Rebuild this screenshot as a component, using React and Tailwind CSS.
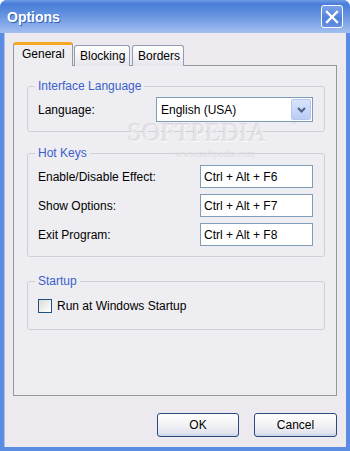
import React from "react";

function Group({ title, className = "", children }) {
  return (
    <fieldset
      className={`border border-[#D0CFD6] rounded-[3px] pl-[7px] pr-[11px] ${className}`}
    >
      <legend className="px-[3px] text-[12px] leading-[14px] text-[#3A5FCD]">
        {title}
      </legend>
      {children}
    </fieldset>
  );
}

function KeyInput({ value }) {
  return (
    <div className="w-[113px] h-[23px] bg-white border border-[#7F9DB9] flex items-center pl-[3px] text-[12px] text-black">
      {value}
    </div>
  );
}

function XPButton({ children, w }) {
  return (
    <div
      className={`${w} h-[24px] rounded-[3px] border border-[#2B4A80] flex items-center justify-center text-[12px] text-black bg-[linear-gradient(to_bottom,#FFFFFF_0%,#F4F4F6_45%,#E3E5EE_85%,#C9D2E6_100%)]`}
    >
      {children}
    </div>
  );
}

export default function App() {
  return (
    <div className="relative w-[350px] h-[451px] flex flex-col overflow-hidden rounded-t-[7px] bg-[#5A8CE2] font-['Liberation_Sans',Arial,sans-serif] select-none">
      {/* Title bar */}
      <div className="h-[33px] shrink-0 flex items-center justify-between pl-[7px] pr-[7px] bg-[linear-gradient(to_bottom,#6E9BE6_0%,#4A7ED8_12%,#5A8BDD_35%,#86AAE9_75%,#A2BFEE_100%)]">
        <span className="text-white font-bold text-[14px] leading-none mt-[1px] [text-shadow:1px_1px_0_#3060B8]">
          Options
        </span>
        <div className="w-[22px] h-[23px] rounded-[3px] border border-white flex items-center justify-center bg-[linear-gradient(to_bottom,#7BA2E8,#4F80DA_60%,#6690E0)]">
          <svg width="14" height="14" viewBox="0 0 14 14">
            <path d="M2 2 L12 12 M12 2 L2 12" stroke="white" strokeWidth="2.4" strokeLinecap="square" />
          </svg>
        </div>
      </div>

      {/* Body */}
      <div className="flex-1 flex flex-col ml-[4px] mr-[4px] mb-[4px] bg-[#ECEAEF] border-l border-[#A8C3F0]">
        {/* Tabs */}
        <div className="flex items-end h-[24px] mt-[9px] ml-[8px] -mb-px relative z-10 text-[12px] text-black">
          <div className="w-[60px] h-[24px] rounded-t-[3px] border-x border-[#919B9C] border-t-[3px] border-t-[#F5A623] bg-[#EEEDF1] flex items-center pl-[8px] pb-[3px]">
            General
          </div>
          <div className="ml-[1px] w-[56px] h-[21px] rounded-t-[3px] border border-b-0 border-[#919BB4] bg-[linear-gradient(to_bottom,#FFFFFF,#F1F0F4_60%,#E6E5EC)] flex items-center pl-[5px]">
            Blocking
          </div>
          <div className="ml-[2px] w-[52px] h-[21px] rounded-t-[3px] border border-b-0 border-[#919BB4] bg-[linear-gradient(to_bottom,#FFFFFF,#F1F0F4_60%,#E6E5EC)] flex items-center pl-[5px]">
            Borders
          </div>
        </div>

        {/* Tab panel */}
        <div className="ml-[8px] mr-[9px] h-[331px] border border-[#919B9C] bg-[#EEEDF1] flex flex-col px-[13px] pr-[11px] text-[12px] text-black">
          <Group title="Interface Language" className="mt-[13px] pb-[9px] pt-[4px]">
            <div className="flex items-center justify-between pl-[3px]">
              <span>Language:</span>
              <div className="w-[157px] h-[25px] bg-white border border-[#7F9DB9] flex items-center justify-between pl-[4px] pr-[1px]">
                <span>English (USA)</span>
                <div className="w-[20px] h-[21px] rounded-[2px] border border-[#B4C7EF] bg-[linear-gradient(to_bottom,#D8E4FD,#BACCF5)] flex items-center justify-center">
                  <svg width="9" height="6" viewBox="0 0 9 6">
                    <path d="M1 1 L4.5 4.5 L8 1" stroke="#4D6185" strokeWidth="2" fill="none" />
                  </svg>
                </div>
              </div>
            </div>
          </Group>

          <Group title="Hot Keys" className="mt-[14px] pt-[5px] pb-[10px]">
            <div className="flex flex-col gap-[6px] pl-[3px]">
              <div className="flex items-center justify-between">
                <span>Enable/Disable Effect:</span>
                <KeyInput value="Ctrl + Alt + F6" />
              </div>
              <div className="flex items-center justify-between">
                <span>Show Options:</span>
                <KeyInput value="Ctrl + Alt + F7" />
              </div>
              <div className="flex items-center justify-between">
                <span>Exit Program:</span>
                <KeyInput value="Ctrl + Alt + F8" />
              </div>
            </div>
          </Group>

          <Group title="Startup" className="mt-[17px] pt-[9px] pb-[14px]">
            <div className="flex items-center gap-[5px] pl-[3px]">
              <div className="w-[14px] h-[14px] border border-[#1C5180] bg-[linear-gradient(135deg,#DCDAD5,#F6F6F4_70%,#FFFFFF)]" />
              <span>Run at Windows Startup</span>
            </div>
          </Group>
        </div>

        {/* Buttons */}
        <div className="flex justify-end gap-[15px] mt-[17px] mr-[9px]">
          <XPButton w="w-[82px]">OK</XPButton>
          <XPButton w="w-[83px]">Cancel</XPButton>
        </div>
      </div>

      {/* Softpedia watermark */}
      <div className="pointer-events-none absolute left-[128px] top-[120px] font-['Liberation_Serif',serif] text-[25px] leading-[25px] tracking-[0.5px] text-[#E6E4E9] [text-shadow:1px_1px_0_#F8F8FA,-1px_-1px_0_#DAD8DE]">
        SOFTPEDIA
      </div>
      <div className="pointer-events-none absolute left-[290px] top-[120px] text-[6px] text-[#DCDAE0]">
        ™
      </div>
      <div className="pointer-events-none absolute left-[175px] top-[149px] font-['Liberation_Serif',serif] text-[10px] leading-[10px] text-[#DEDCE2]">
        www.softpedia.com
      </div>
    </div>
  );
}
